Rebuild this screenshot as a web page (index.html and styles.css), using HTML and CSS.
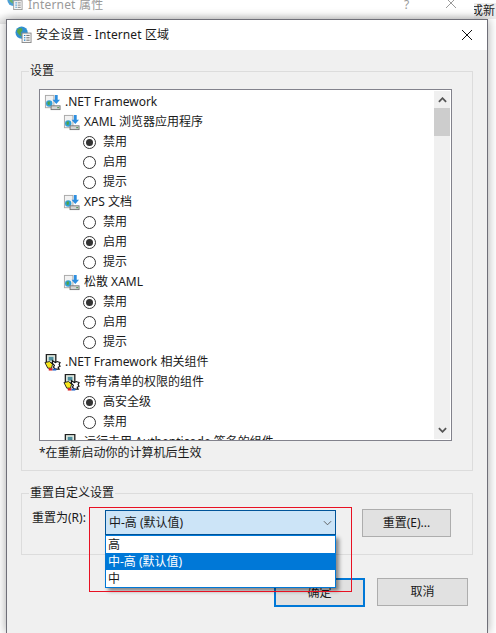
FILE: index.html
```html
<!DOCTYPE html>
<html lang="zh">
<head>
<meta charset="utf-8">
<title>安全设置 - Internet 区域</title>
<link rel="stylesheet" href="styles.css">
</head>
<body>
<svg class="defs" width="0" height="0" aria-hidden="true">
  <defs>
    <symbol id="net" viewBox="0 0 18 18">
      <rect x="1.500" y="1.500" width="9" height="13" fill="#f2f2f2" stroke="#a8a8a8" stroke-width="1"/>
      <circle cx="5.500" cy="10" r="3.400" fill="#2f9fd8"/>
      <path d="M3.500 9l2-1.500 1 2-1 2.500-1.500-1z" fill="#4fa44a"/>
      <path d="M11.500 1h3v5h2.500l-4 4.500-4-4.500h2.500z" fill="#2e8fe0"/>
      <rect x="7.500" y="12.500" width="9.500" height="4" fill="#d4d4d4" stroke="#777" stroke-width="1"/>
      <rect x="14" y="14" width="2" height="1" fill="#3c8a3c"/>
    </symbol>
    <symbol id="comp" viewBox="0 0 18 18">
      <rect x="2.500" y="0.500" width="10" height="9" fill="#dfe8df" stroke="#222" stroke-width="1.400"/>
      <rect x="5" y="3" width="5" height="4" fill="#4f8f9f"/>
      <path d="M1 9l5-1 3 3-1 4-4 0z" fill="#f8e81c" stroke="#222" stroke-width="1"/>
      <path d="M9 7l3 2 2-1 3 1-1 2 1 2-2 1 1 2-4 0-2-2 1-2-2-2z" fill="#fff" stroke="#111" stroke-width="1.200"/>
      <rect x="5" y="15" width="4" height="2.500" fill="#d82020"/>
      <rect x="9" y="15.500" width="4" height="2" fill="#1c60c8"/>
    </symbol>
    <symbol id="globe" viewBox="0 0 18 18">
      <circle cx="7" cy="7" r="6.500" fill="#2f8fd0"/>
      <path d="M3 3l4-1 1 3-2 2 1 4-3-2-2-3z" fill="#5aa548"/>
      <rect x="7.500" y="7.500" width="9.500" height="10" fill="#f6f6f6" stroke="#8a8a8a" stroke-width="1"/>
      <path d="M9.500 10h1.500M9.500 12.500h1.500M9.500 15h1.500" stroke="#1f80c8" stroke-width="1.200"/>
      <path d="M12 10h3.500M12 12.500h3.500M12 15h3.500" stroke="#666" stroke-width="1"/>
    </symbol>
  </defs>
</svg>

<div class="behind">
  <div class="behind-title">
    <svg class="behind-icon"><use href="#globe"/></svg>
    <span class="behind-text">Internet 属性</span>
    <span class="behind-help">?</span>
    <svg class="behind-x" viewBox="0 0 10 10"><path d="M0 0l10 10M10 0L0 10"/></svg>
  </div>
  <span class="behind-side">成新</span>
</div>

<main class="dialog">
  <header class="titlebar">
    <svg class="title-icon"><use href="#globe"/></svg>
    <h1 class="title">安全设置 - Internet 区域</h1>
    <svg class="close" viewBox="0 0 10 10"><path d="M0 0l10 10M10 0L0 10"/></svg>
  </header>

  <div class="body">
    <fieldset class="group settings">
      <legend>设置</legend>
      <div class="settings-inner">
        <div class="listbox">
          <div class="list">
            <div class="row"><svg class="ico"><use href="#net"/></svg>.NET Framework</div>
            <div class="row l1"><svg class="ico"><use href="#net"/></svg>XAML 浏览器应用程序</div>
            <div class="row l2"><i class="radio on"></i>禁用</div>
            <div class="row l2"><i class="radio"></i>启用</div>
            <div class="row l2"><i class="radio"></i>提示</div>
            <div class="row l1"><svg class="ico"><use href="#net"/></svg>XPS 文档</div>
            <div class="row l2"><i class="radio"></i>禁用</div>
            <div class="row l2"><i class="radio on"></i>启用</div>
            <div class="row l2"><i class="radio"></i>提示</div>
            <div class="row l1"><svg class="ico"><use href="#net"/></svg>松散 XAML</div>
            <div class="row l2"><i class="radio on"></i>禁用</div>
            <div class="row l2"><i class="radio"></i>启用</div>
            <div class="row l2"><i class="radio"></i>提示</div>
            <div class="row"><svg class="ico"><use href="#comp"/></svg>.NET Framework 相关组件</div>
            <div class="row l1"><svg class="ico"><use href="#comp"/></svg>带有清单的权限的组件</div>
            <div class="row l2"><i class="radio on"></i>高安全级</div>
            <div class="row l2"><i class="radio"></i>禁用</div>
            <div class="row l1"><svg class="ico"><use href="#comp"/></svg>运行未用 Authenticode 签名的组件</div>
          </div>
          <div class="scrollbar">
            <svg class="arrow" viewBox="0 0 10 6"><path d="M1 5l4-4 4 4"/></svg>
            <div class="thumb"></div>
            <svg class="arrow down" viewBox="0 0 10 6"><path d="M1 1l4 4 4-4"/></svg>
          </div>
        </div>
        <p class="note">*在重新启动你的计算机后生效</p>
      </div>
    </fieldset>

    <fieldset class="group reset">
      <legend>重置自定义设置</legend>
      <div class="reset-row">
        <span class="reset-label">重置为(R):</span>
        <div class="combo-wrap">
          <div class="combo">
            <span>中-高 (默认值)</span>
            <svg class="combo-arrow" viewBox="0 0 10 6"><path d="M1 1l4 4 4-4"/></svg>
          </div>
          <ul class="menu">
            <li>高</li>
            <li class="sel">中-高 (默认值)</li>
            <li>中</li>
          </ul>
          <div class="annot"></div>
        </div>
        <button class="btn reset-btn">重置(E)...</button>
      </div>
    </fieldset>

    <div class="actions">
      <button class="btn ok">确定</button>
      <button class="btn cancel">取消</button>
    </div>
  </div>
</main>
</body>
</html>
```
FILE: styles.css
```css
* { box-sizing: border-box; }
html, body { margin: 0; height: 100%; }
body {
  width: 496px; height: 633px; overflow: hidden; background: #fff; position: relative;
  font: 12px/16px "Noto Sans", "Noto Sans CJK SC", sans-serif; color: #1a1a1a;
  padding: 19px 0 0 6px;
}
.defs { position: absolute; }

.behind { position: absolute; left: 0; top: 0; width: 496px; height: 24px; }
.behind-title { width: 474px; height: 24px; position: relative; display: flex; background: linear-gradient(#fff 13px, #e6e6e6); }
.behind-icon { position: absolute; left: 7px; top: -7px; width: 16px; height: 18px; opacity: .85; }
.behind-text { position: absolute; left: 28px; top: -3px; color: #9a9a9a; letter-spacing: .2px; }
.behind-help { position: absolute; left: 404px; top: -3px; color: #9a9a9a; }
.behind-x { position: absolute; left: 446px; top: -2px; width: 10px; height: 10px; stroke: #9a9a9a; fill: none; }
.behind-side { position: absolute; left: 474px; top: 3px; color: #222; width: 22px; overflow: hidden; white-space: nowrap; background: #eee; text-indent: -3px; }

.dialog {
  position: relative; width: 482px; height: 614px;
  border: 1px solid #6f6f78; border-bottom: 0; background: #f0f0f0;
  box-shadow: 0 0 10px rgba(0,0,0,.35);
}
.titlebar { height: 30px; background: #fff; display: flex; align-items: center; padding: 0 0 0 8px; }
.title-icon { width: 17px; height: 17px; margin-top: -2px; }
.title { margin: 0 0 0 4px; font-size: 12px; font-weight: 400; flex: 1; letter-spacing: .1px; }
.close { width: 10px; height: 10px; margin-right: 15px; stroke: #111; stroke-width: 1; fill: none; }

.body { padding: 12px 14px 0 14px; }
.group { margin: 0; padding: 0; border: 1px solid #dcdcdc; position: relative; min-width: 0; }
.group legend { margin-left: 7px; padding: 0 1px; font-size: 12px; line-height: 16px; }
.settings { height: 408px; margin-top: 1px; }
.settings-inner { padding-left: 17px; }
.listbox {
  width: 413px; height: 352px; margin-top: 10px;
  border: 1px solid #82828c; background: #fff; display: flex; overflow: hidden;
}
.list { flex: 1; overflow: hidden; padding-top: 2px; }
.row {
  height: 20px; display: flex; align-items: center; padding-left: 4px; white-space: nowrap;
}
.l1 { padding-left: 23px; }
.l2 { padding-left: 43px; }
.ico { width: 17px; height: 17px; margin-right: 4px; flex: none; }
.radio {
  width: 13px; height: 13px; border-radius: 50%; border: 1px solid #333; background: #fff;
  margin-right: 7px; flex: none; display: flex; align-items: center; justify-content: center;
}
.radio.on::after { content: ""; width: 7px; height: 7px; border-radius: 50%; background: #333; }
.scrollbar { width: 16px; margin: 1px 1px 1px 0; background: #f0f0f0; display: flex; flex-direction: column; align-items: center; }
.arrow { width: 9px; height: 6px; margin: 6px 0 5px; stroke: #555; stroke-width: 2; fill: none; flex: none; }
.arrow.down { margin: auto 0 6px; }
.thumb { width: 16px; height: 28px; background: #cdcdcd; }
.note { margin: 4px 0 0 0; font-size: 12px; line-height: 16px; }

.reset { height: 70px; margin-top: 14px; }
.reset-row { display: flex; align-items: flex-start; padding-left: 10px; margin-top: 9px; }
.reset-label { width: 73px; line-height: 16px; margin-top: 0; }
.combo-wrap { position: relative; width: 231px; }
.combo {
  height: 25px; width: 231px; background: #cce4f7; border: 1px solid #005499;
  display: flex; align-items: center; justify-content: space-between; padding: 0 3px 0 3px;
}
.combo-arrow { width: 9px; height: 6px; stroke: #555; stroke-width: 1; fill: none; }
.menu {
  position: absolute; left: 0; top: 25px; width: 231px; height: 53px; margin: 0; padding: 0; list-style: none; z-index: 2;
  background: #fff; border: 1px solid #0078d7; box-shadow: 3px 3px 4px rgba(0,0,0,.45);
}
.menu li { height: 17px; line-height: 17px; padding-left: 2px; }
.menu .sel { background: #0078d7; color: #fff; }
.annot { position: absolute; left: -16px; top: -3px; width: 263px; height: 85px; border: 1px solid #e81123; z-index: 3; pointer-events: none; }
.btn {
  font: inherit; color: #1a1a1a; background: #e1e1e1; border: 1px solid #adadad; padding: 0; margin: 0;
  display: block;
}
.reset-btn { width: 89px; height: 28px; margin: -1px 0 0 26px; }
.actions { display: flex; justify-content: flex-end; gap: 12px; padding-right: 5px; margin-top: 23px; }
.ok { width: 91px; height: 29px; border: 2px solid #0078d7; }
.cancel { width: 91px; height: 28px; }
```
